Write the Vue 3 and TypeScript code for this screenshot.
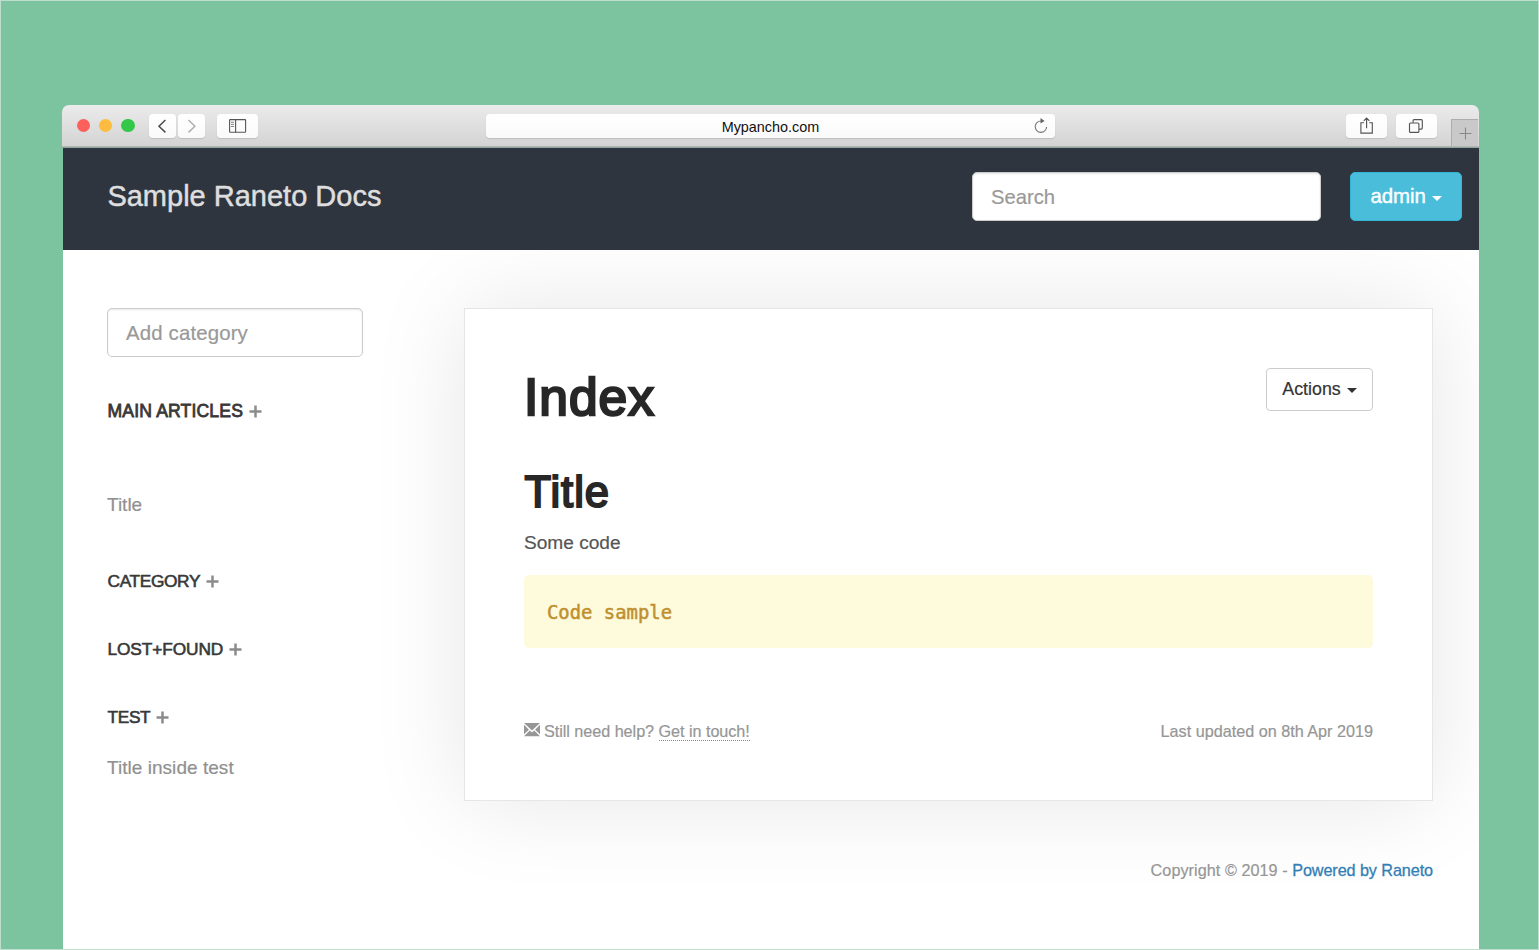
<script setup lang="ts">
interface Category {
  name: string
  kind: string
  pages: string[]
}

const categories: Category[] = [
  { name: 'MAIN ARTICLES', kind: 'main', pages: ['Title'] },
  { name: 'CATEGORY', kind: 'plain', pages: [] },
  { name: 'LOST+FOUND', kind: 'lost', pages: [] },
  { name: 'TEST', kind: 'test', pages: ['Title inside test'] },
]
</script>

<template>
  <div class="backdrop">
    <div class="window">
      <header class="toolbar">
        <div class="lights">
          <span class="light red"></span>
          <span class="light amber"></span>
          <span class="light green"></span>
        </div>
        <div class="pair">
          <button class="tool small" aria-label="Back">
            <svg width="27" height="24" viewBox="0 0 27 24"><path d="M16.4 6 10 12.2l6.4 6.2" fill="none" stroke="#4b4b4b" stroke-width="1.5" /></svg>
          </button>
          <button class="tool small" aria-label="Forward">
            <svg width="27" height="24" viewBox="0 0 27 24"><path d="m10.5 6 6.4 6.2-6.4 6.2" fill="none" stroke="#b0b0b0" stroke-width="1.5" /></svg>
          </button>
        </div>
        <button class="tool panel" aria-label="Sidebar">
          <svg width="41" height="24" viewBox="0 0 41 24" fill="none" stroke="#555">
            <rect x="12.6" y="5.6" width="16" height="12.7" rx=".6" stroke-width="1.1" />
            <path d="M18.6 5.6v12.7" stroke-width="1.1" />
            <path d="M14 8.3h3M14 10.4h3M14 12.5h3" stroke-width=".9" stroke="#777" />
          </svg>
        </button>
        <div class="address">
          <span>Mypancho.com</span>
          <svg class="reload" width="18" height="20" viewBox="0 0 18 20">
            <path d="M8.9 5A5.7 5.7 0 1 0 14.6 11" fill="none" stroke="#777" stroke-width="1.1" />
            <path d="m8.5 2 4.1 2.9-4.1 2.7z" fill="#666" />
          </svg>
        </div>
        <button class="tool share" aria-label="Share">
          <svg width="41" height="24" viewBox="0 0 41 24" fill="none" stroke="#555" stroke-width="1.15">
            <path d="M18 8.7h-3.1v10.4h11.4V8.7h-3.1M20.6 14.3V4M17.8 6.9l2.8-2.9 2.8 2.9" />
          </svg>
        </button>
        <button class="tool tabs" aria-label="Tabs">
          <svg width="41" height="24" viewBox="0 0 41 24" fill="none" stroke="#555" stroke-width="1.15">
            <rect x="13.5" y="9" width="9.4" height="9.4" rx="1" />
            <path d="M17.1 8.8V6.6q0-1 1-1h7.2q1 0 1 1v7.5q0 1-1 1h-2.2" />
          </svg>
        </button>
        <div class="newtab">
          <svg width="26" height="27" viewBox="0 0 26 27"><path d="M13.5 7.5v12M7.5 13.5h12" stroke="#888" stroke-width="1.1" /></svg>
        </div>
      </header>

      <nav class="navbar">
        <a class="brand">Sample Raneto Docs</a>
        <input class="search" type="text" placeholder="Search" />
        <button class="admin">admin <i class="caret"></i></button>
      </nav>

      <div class="page">
        <aside class="sidebar">
          <input class="add" type="text" placeholder="Add category" />
          <section v-for="c in categories" :key="c.name" class="category" :class="c.kind">
            <h5>
              <span>{{ c.name }}</span>
              <svg width="13" height="13" viewBox="0 0 13 13"><path d="M6.5 .5v12M.5 6.5h12" stroke="#8c8c8c" stroke-width="2.5" /></svg>
            </h5>
            <a v-for="p in c.pages" :key="p">{{ p }}</a>
          </section>
        </aside>

        <main>
          <article class="card">
            <div class="heading">
              <h1>Index</h1>
              <button class="actions">Actions <i class="caret"></i></button>
            </div>
            <h2>Title</h2>
            <p>Some code</p>
            <pre>Code sample</pre>
            <footer class="meta">
              <div class="help">
                <svg width="16" height="14" viewBox="0 0 16 14">
                  <path d="M0 0h16L8 7.6zM0 1.8 4.9 6.7 0 11.2zM16 1.8v9.4l-4.9-4.5zM0 13.2 5.8 7.5 8 9.6l2.2-2.1 5.8 5.7z" fill="#969696" />
                </svg>
                <span>Still need help? <a>Get in touch!</a></span>
              </div>
              <span>Last updated on 8th Apr 2019</span>
            </footer>
          </article>
          <footer class="copyright">Copyright © 2019 - <a>Powered by Raneto</a></footer>
        </main>
      </div>
    </div>
  </div>
</template>

<style>
body {
  margin: 0;
  overflow: hidden;
}
</style>

<style scoped>
* {
  box-sizing: border-box;
}
.backdrop {
  width: 1539px;
  height: 950px;
  padding: 104px 59px 0 61px;
  border: 1px solid #bfdfce;
  background: #7bc49f;
  overflow: hidden;
  font-family: "Liberation Sans", Arial, sans-serif;
}
.window {
  width: 1417px;
  height: 844px;
  border-radius: 7px 7px 0 0;
  overflow: hidden;
}
button,
input {
  margin: 0;
  font-family: inherit;
}
.toolbar {
  display: flex;
  align-items: flex-start;
  height: 43px;
  padding: 9px 0 0 14.5px;
  background: linear-gradient(#ebebeb, #d3d3d3);
  border-bottom: 1px solid #8fa89b;
  box-shadow: inset 0 -1px #b4b4b4;
}
.lights {
  display: flex;
  gap: 9px;
  padding-top: 4.5px;
}
.light {
  width: 13.4px;
  height: 13.4px;
  border-radius: 50%;
}
.red { background: #fc605b; }
.amber { background: #fdbc40; }
.green { background: #34c84a; }
.pair {
  display: flex;
  gap: 2px;
  margin-left: 14.3px;
}
.tool {
  width: 41px;
  height: 24px;
  padding: 0;
  border: 0;
  border-radius: 4px;
  background: linear-gradient(#fff, #fafafa);
  box-shadow: 0 1px 1px rgba(0, 0, 0, 0.12);
}
.tool svg {
  display: block;
}
.small { width: 27px; }
.panel { margin-left: 12px; }
.address {
  position: relative;
  width: 569px;
  height: 24px;
  margin-left: 228px;
  border-radius: 4px;
  background: linear-gradient(#fff, #fafafa);
  box-shadow: 0 1px 1px rgba(0, 0, 0, 0.12);
  text-align: center;
  font-size: 14.4px;
  line-height: 26px;
  color: #111;
}
.reload {
  position: absolute;
  top: 2px;
  right: 5px;
}
.share { margin-left: 291px; }
.tabs { margin-left: 9px; }
.newtab {
  flex: none;
  width: 27px;
  height: 27px;
  margin: 5px 0 0 14px;
  border: 1px solid #adadad;
  border-width: 1px 0 0 1px;
  background: #c9c9c9;
}
.navbar {
  display: flex;
  height: 102px;
  padding: 24px 17px 0 44.4px;
  margin-left: 1px;
  background: #2f353f;
}
.brand {
  flex: 1;
  font-size: 29px;
  line-height: 49px;
  color: #dedede;
  -webkit-text-stroke: 0.5px #dedede;
}
.search,
.add {
  display: block;
  height: 49px;
  padding: 1px 18px 0;
  border: 1px solid #ccc;
  border-radius: 5px;
  background: #fff;
  font-size: 20.4px;
  color: #555;
  box-shadow: inset 0 1px 2px rgba(0, 0, 0, 0.1);
}
.search {
  width: 349px;
  font-size: 20.2px;
}
.search::placeholder,
.add::placeholder {
  color: #999;
  opacity: 1;
  -webkit-text-stroke: 0.2px #999;
}
.add::placeholder {
  letter-spacing: 0.15px;
}
.admin {
  width: 112px;
  height: 49px;
  margin-left: 29px;
  padding: 0;
  border: 1px solid #32b5d6;
  border-radius: 5px;
  background: #4abddb;
  color: #fff;
  font-size: 20.4px;
  -webkit-text-stroke: 0.4px #fff;
}
.caret {
  display: inline-block;
  border: 5.5px solid transparent;
  border-top: 5.5px solid currentColor;
  border-bottom: 0;
  vertical-align: 2.5px;
}
.page {
  display: flex;
  height: 699px;
  margin-left: 1px;
  padding: 58px 46px 0 44px;
  background: #fff;
  overflow: hidden;
}
.sidebar {
  width: 357px;
}
.add {
  width: 256px;
  margin-bottom: 43px;
}
.category {
  height: 68.2px;
}
.category h5 {
  display: flex;
  align-items: center;
  gap: 5.5px;
  height: 22px;
  margin: 0;
  padding-left: 0.5px;
  font-size: 17.3px;
  font-weight: 400;
  letter-spacing: -0.1px;
  color: #383838;
  -webkit-text-stroke: 0.6px #383838;
}
.category a {
  display: block;
  font-size: 19px;
  line-height: 24px;
  color: #909090;
  -webkit-text-stroke: 0.2px #909090;
}
.category.main { height: 170px; }
.category.main a { margin-top: 71px; }
.category.main h5 {
  font-size: 17.6px;
  letter-spacing: 0.15px;
  -webkit-text-stroke-width: 0.8px;
}
.category.plain h5 { letter-spacing: -0.35px; }
.category.test h5 { letter-spacing: -0.35px; }
.test a {
  margin-top: 28px;
  letter-spacing: 0.04px;
}
main {
  flex: 1;
}
.card {
  width: 969px;
  height: 493px;
  padding: 59px 59px 0;
  border: 1px solid #e6e6e6;
  background: #fff;
  box-shadow: 0 0 90px rgba(0, 0, 0, 0.1);
}
.heading {
  display: flex;
  justify-content: space-between;
  align-items: flex-start;
}
h1,
h2,
.card p,
pre {
  margin: 0;
}
h1,
h2 {
  font-weight: 400;
  color: #272727;
}
h1 {
  height: 60px;
  font-size: 51.5px;
  line-height: 58px;
  letter-spacing: 1px;
  -webkit-text-stroke: 2.4px #272727;
}
h2 {
  margin-top: 39px;
  padding-left: 0.5px;
  font-size: 43.5px;
  line-height: 50px;
  letter-spacing: 1px;
  -webkit-text-stroke: 2px #272727;
}
.actions {
  width: 107px;
  height: 43px;
  padding: 0 0 1px;
  border: 1px solid #ccc;
  border-radius: 4px;
  background: #fff;
  color: #333;
  font-size: 17.8px;
  -webkit-text-stroke: 0.2px #333;
}
.actions .caret {
  margin-left: 1px;
  vertical-align: 1.5px;
}
.card p {
  margin-top: 14px;
  font-size: 19.1px;
  line-height: 24px;
  color: #555;
  -webkit-text-stroke: 0.2px #555;
}
pre {
  height: 73px;
  margin-top: 20px;
  padding: 0 23px;
  border-radius: 5px;
  background: #fefadc;
  color: #c0902f;
  font: 18.9px/75px "DejaVu Sans Mono", monospace;
  -webkit-text-stroke: 0.5px #c0902f;
}
.meta {
  display: flex;
  justify-content: space-between;
  margin-top: 73px;
  font-size: 16.2px;
  line-height: 20px;
  color: #969696;
  -webkit-text-stroke: 0.2px #969696;
}
.help {
  display: flex;
  gap: 4px;
  letter-spacing: -0.04px;
}
.help svg {
  margin-top: 2px;
}
.help a {
  display: inline-block;
  height: 20px;
  border-bottom: 1px dotted #888;
}
.copyright {
  margin-top: 59px;
  text-align: right;
  font-size: 16.2px;
  line-height: 20px;
  letter-spacing: 0.05px;
  color: #969696;
  -webkit-text-stroke: 0.2px #969696;
}
.copyright a {
  color: #337fb5;
  letter-spacing: -0.08px;
  -webkit-text-stroke: 0.3px #337fb5;
}
</style>
